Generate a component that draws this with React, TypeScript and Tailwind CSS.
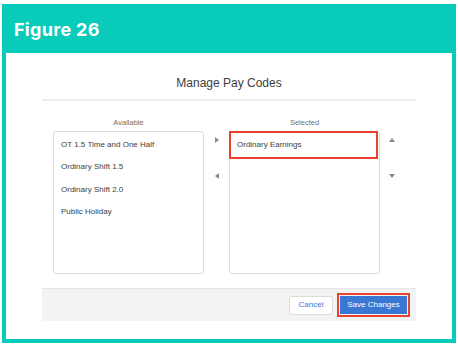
const available = ['OT 1.5 Time and One Half', 'Ordinary Shift 1.5', 'Ordinary Shift 2.0', 'Public Holiday'];

function Tri({ dir }: { dir: 'left' | 'right' | 'up' | 'down' }) {
  const points: Record<string, string> = {
    right: '1,0 5,3 1,6',
    left: '5,0 1,3 5,6',
    up: '0,5 3,1 6,5',
    down: '0,1 3,5 6,1',
  };
  return (
    <svg width="6" height="6" viewBox="0 0 6 6" className="block">
      <polygon points={points[dir]} fill="#8a8886" />
    </svg>
  );
}

export default function App() {
  return (
    <div className="w-[458px] h-[348px] bg-white pt-[4px] pl-[2px]" style={{ fontFamily: '"Liberation Sans", Arial, sans-serif' }}>
      <div className="w-[454px] h-[339px] bg-[#08cbb9] flex flex-col">
        <div className="h-[49px] flex items-center pl-[12px] pt-[2px]">
          <span className="text-white text-[18px] font-bold tracking-[0.3px]" style={{ fontFamily: 'Inter, "Open Sans", sans-serif' }}>
            Figure 26
          </span>
        </div>
        <div className="flex-1 mx-[4px] mb-[4px] bg-white pt-[23px]">
          <div className="ml-[36px] w-[374px]">
            <div className="text-center text-[12px] leading-[15px] text-[#3e3e3c]">Manage Pay Codes</div>
            <div className="mt-[8px] h-[2px] bg-[#ececec]" />
            <div className="flex pl-[11px] mt-[17px]">
              <div className="w-[151px] flex flex-col">
                <div className="text-center text-[7.5px] leading-[9px] text-[#706e6b] mb-[4px]">Available</div>
                <div className="h-[143px] border border-[#dddbda] rounded-[3px] pt-[2px]">
                  {available.map((a) => (
                    <div key={a} className="h-[22.3px] pl-[7px] flex items-center text-[8px] text-[#3e3e3c]">
                      {a}
                    </div>
                  ))}
                </div>
              </div>
              <div className="w-[25px] flex flex-col items-center pt-[19px] gap-[30px]">
                <Tri dir="right" />
                <Tri dir="left" />
              </div>
              <div className="w-[151px] flex flex-col">
                <div className="text-center text-[7.5px] leading-[9px] text-[#706e6b] mb-[4px]">Selected</div>
                <div className="h-[143px] border border-[#dddbda] rounded-[3px]">
                  <div className="h-[28px] w-[149px] -ml-px -mt-px border-2 border-[#e8432d] flex items-center pl-[6px] text-[8px] text-[#3e3e3c]">
                    Ordinary Earnings
                  </div>
                </div>
              </div>
              <div className="w-[24px] flex flex-col items-center pt-[19px] gap-[30px]">
                <Tri dir="up" />
                <Tri dir="down" />
              </div>
            </div>
            <div className="mt-[14px] h-[33px] bg-[#f3f3f3] border-t border-[#e5e5e5] flex items-center justify-end pr-[6px] gap-[4px]">
              <div className="w-[44px] h-[19px] bg-white border border-[#dddbda] rounded-[3px] flex items-center justify-center text-[8px] text-[#3b79d4]">
                Cancel
              </div>
              <div className="w-[73px] h-[24px] border-2 border-[#e8432d] p-[1px]">
                <div className="w-full h-full bg-[#3a77d4] flex items-center justify-center text-[8px] text-white">Save Changes</div>
              </div>
            </div>
          </div>
        </div>
      </div>
    </div>
  );
}
